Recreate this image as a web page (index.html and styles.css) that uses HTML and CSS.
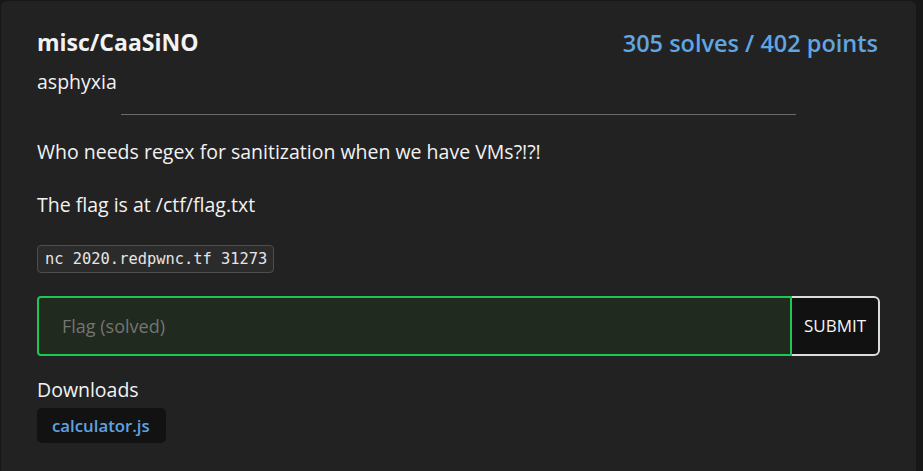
FILE: index.html
```html
<!DOCTYPE html>
<html lang="en">
<head>
<meta charset="utf-8">
<title>misc/CaaSiNO</title>
<link rel="stylesheet" href="styles.css">
</head>
<body>
<div class="card">
  <div class="head">
    <div>
      <h1 class="title">misc/CaaSiNO</h1>
      <div class="author">asphyxia</div>
    </div>
    <div class="stats">305 solves / 402 points</div>
  </div>
  <hr class="rule">
  <div class="desc">
    <p>Who needs regex for sanitization when we have VMs?!?!</p>
    <p>The flag is at /ctf/flag.txt</p>
    <div class="cmdwrap"><code class="cmd">nc 2020.redpwnc.tf 31273</code></div>
  </div>
  <form class="flagform">
    <input class="flaginput" type="text" placeholder="Flag (solved)">
    <button class="submit" type="button">SUBMIT</button>
  </form>
  <div class="downloads">
    <div class="dl-title">Downloads</div>
    <a class="chip" href="#">calculator.js</a>
  </div>
</div>
</body>
</html>
```

FILE: styles.css
```css
* { box-sizing: border-box; }
html, body { margin: 0; height: 100%; }
body {
  background: #171717;
  font-family: "Open Sans", "Noto Sans", sans-serif;
  color: #f2f2f2;
  padding: 1px 7px 0 1px;
  overflow: hidden;
}
.card {
  background: #222222;
  border-radius: 6px;
  padding: 24px 36px 40px 36px;
  min-height: 520px;
}
.head {
  display: flex;
  justify-content: space-between;
  align-items: flex-start;
}
.title {
  margin: 0;
  font-size: 23px;
  font-weight: 700;
  line-height: 34px;
}
.author {
  font-size: 19.5px;
  line-height: 26px;
  margin-top: 10px;
}
.stats {
  color: #5fa6e2;
  font-size: 23.5px;
  font-weight: 600;
  line-height: 34px;
  margin-top: 1px;
  margin-right: 2px;
}
.rule {
  width: 675px;
  margin: 19px auto 0;
  border: 0;
  border-top: 1px solid #6a6a6a;
  height: 0;
}
.desc { margin-top: 23px; }
.desc p {
  margin: 0 0 25px;
  font-size: 19.5px;
  line-height: 28px;
}
.cmdwrap { margin-top: 25.5px; }
.cmd {
  display: inline-block;
  font-family: "DejaVu Sans Mono", "Liberation Mono", monospace;
  font-size: 15.4px;
  line-height: 22px;
  padding: 2px 6px 2px 7px;
  background: #2b2b2b;
  border: 1px solid #4e4e4e;
  border-radius: 4px;
  color: #e6e6e6;
}
.flagform {
  display: flex;
  margin-top: 23px;
  height: 60px;
}
.flaginput {
  flex: 1;
  background: #212a1f;
  border: 2px solid #1dc655;
  border-radius: 4px 0 0 4px;
  padding: 0 23px;
  font-family: inherit;
  font-size: 18px;
  color: #eee;
  outline: none;
}
.flaginput::placeholder { color: #747474; }
.submit {
  width: 88px;
  background: #111111;
  border: 2px solid #dcdcdc;
  border-left: 0;
  border-radius: 0 6px 6px 0;
  color: #f5f5f5;
  font-family: inherit;
  font-size: 17px;
  padding: 0;
}
.downloads { margin-top: 20.5px; }
.dl-title {
  font-size: 19.5px;
  line-height: 28px;
}
.chip {
  display: inline-block;
  margin-top: 3.5px;
  background: #121212;
  border-radius: 5px;
  padding: 5px 16px 5px 15px;
  color: #5ea3e0;
  font-size: 16.8px;
  font-weight: 600;
  line-height: 25px;
  text-decoration: none;
}
```
